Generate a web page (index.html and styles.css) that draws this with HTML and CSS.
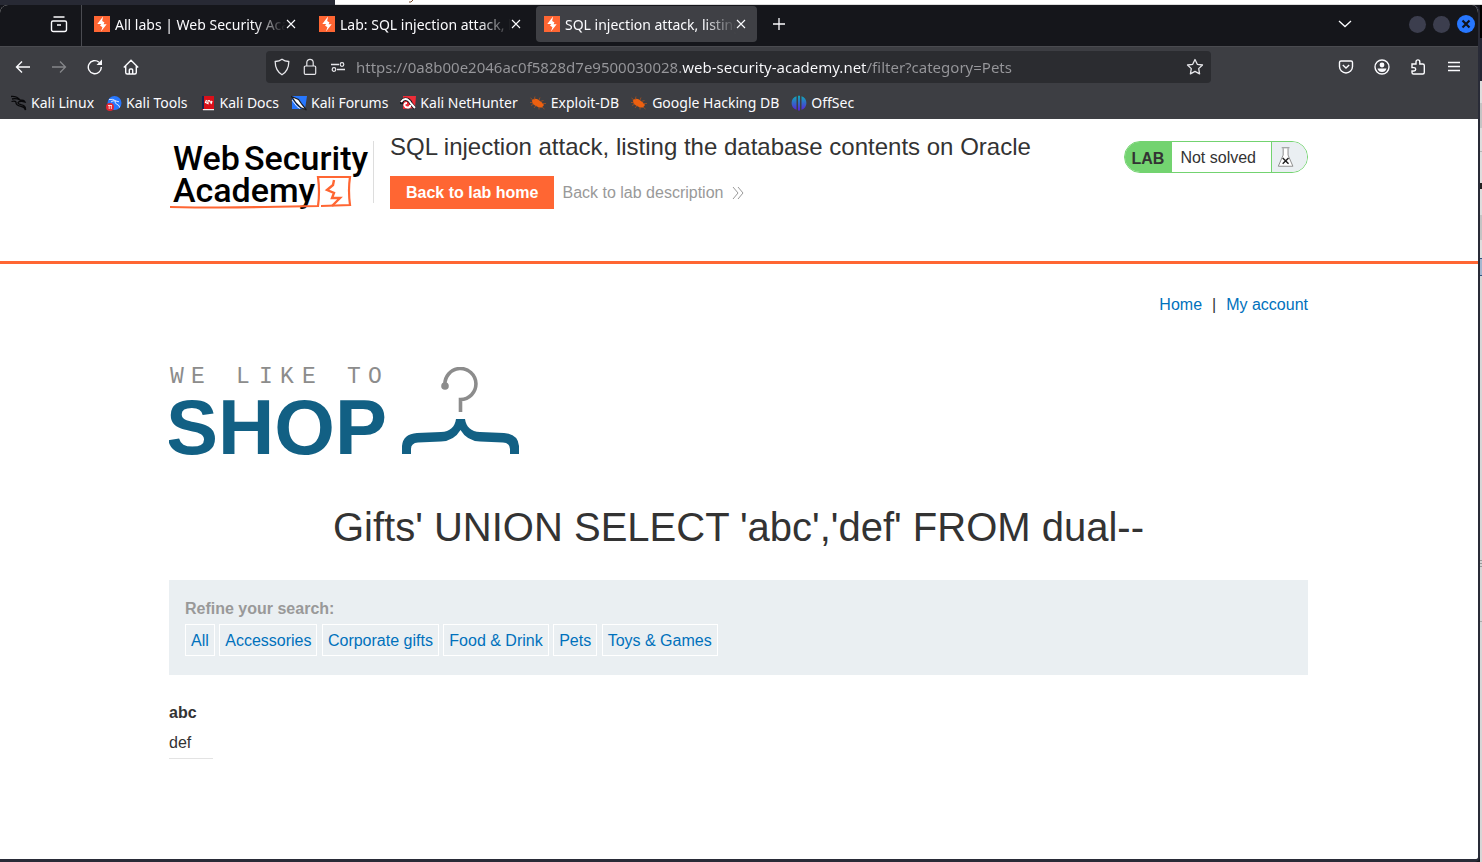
FILE: index.html
```html
<!DOCTYPE html>
<html lang="en">
<head>
<meta charset="utf-8">
<title>SQL injection attack, listing the database contents on Oracle</title>
<link rel="stylesheet" href="styles.css">
</head>
<body>
<svg class="defs" aria-hidden="true">
  <defs>
    <symbol id="bolt" viewBox="0 0 16 16">
      <rect width="16" height="16" fill="#ff6633"/>
      <path d="M9 .5 3.300 8h4L6 9.500 8.400 11.200 7 15.500 12.700 8.200H9.500l1-1.700L8.200 5z" fill="#fff"/>
    </symbol>
    <symbol id="close" viewBox="0 0 10 10"><path d="m1 1 8 8M9 1 1 9" fill="none" stroke="#fbfbfe" stroke-width="1.1"/></symbol>
    <symbol id="bug" viewBox="0 0 16 16">
      <path d="M2 5.500c1-2 4-2.500 6-1L12 7.500l2 2.500-2 2.500H9l-4-2-2.500-2z" fill="#ee6010"/>
      <path d="m4 5 1-3.500M2 7.500H0M3 5 .5 3M4 9l-3 1.500m5 0-2 2.500m5-1 0 2.500M9 5l1-2.500m0 4 3.500-1M12 8.500h4M12 12l2.500 2" fill="none" stroke="#a85220" stroke-width=".8"/>
    </symbol>
  </defs>
</svg>
<div class="behind-top"><div class="behind-page"><svg width="8" height="4" viewBox="0 0 8 4" aria-hidden="true"><path d="M5 0 3 2H1" fill="none" stroke="#7a4b2a"/></svg></div></div>
<div class="desktop">
<div class="window">
  <header class="tabbar">
    <button class="icon-btn recent" aria-label="Recent browsing"><svg width="18" height="18" viewBox="0 0 18 18"><path d="M3.500 2h11M3 6h12q1.500 0 1.500 1.500v7q0 2-2 2h-11q-2 0-2-2v-7Q1.500 6 3 6zM7 10h4" fill="none" stroke="#fbfbfe" stroke-width="1.400"/></svg></button>
    <div class="tabs">
      <div class="tab"><svg class="i16"><use href="#bolt"/></svg><span class="tab-title">All labs | Web Security Academy</span><button class="icon-btn" aria-label="Close tab"><svg class="i10"><use href="#close"/></svg></button></div>
      <div class="tab"><svg class="i16"><use href="#bolt"/></svg><span class="tab-title">Lab: SQL injection attack, listing</span><button class="icon-btn" aria-label="Close tab"><svg class="i10"><use href="#close"/></svg></button></div>
      <div class="tab active"><svg class="i16"><use href="#bolt"/></svg><span class="tab-title">SQL injection attack, listing the</span><button class="icon-btn" aria-label="Close tab"><svg class="i10"><use href="#close"/></svg></button></div>
    </div>
    <button class="icon-btn new-tab" aria-label="New tab"><svg width="14" height="14" viewBox="0 0 14 14"><path d="M7 1v12M1 7h12" stroke="#fbfbfe" stroke-width="1.300"/></svg></button>
    <button class="icon-btn list-tabs" aria-label="List all tabs"><svg width="14" height="8" viewBox="0 0 14 8"><path d="m1 1 6 5.500L13 1" fill="none" stroke="#fbfbfe" stroke-width="1.300"/></svg></button>
    <div class="controls">
      <button class="ctl" aria-label="Minimize"></button>
      <button class="ctl" aria-label="Maximize"></button>
      <button class="ctl ctl-close" aria-label="Close window"><svg width="10" height="10" viewBox="0 0 10 10"><path d="m1.500 1.500 7 7M8.500 1.500l-7 7" stroke="#10131c" stroke-width="2.200"/></svg></button>
    </div>
  </header>
  <div class="navbar">
    <div class="nav-left">
      <button class="icon-btn" aria-label="Back"><svg width="16" height="16" viewBox="0 0 16 16"><path d="M15 8H1.500M7 2.500 1.500 8 7 13.500" fill="none" stroke="#fbfbfe" stroke-width="1.400"/></svg></button>
      <button class="icon-btn" aria-label="Forward"><svg width="16" height="16" viewBox="0 0 16 16"><path d="M1 8h13.500M9 2.500 14.500 8 9 13.500" fill="none" stroke="#85868a" stroke-width="1.300"/></svg></button>
      <button class="icon-btn" aria-label="Reload"><svg width="16" height="16" viewBox="0 0 16 16"><path d="M14.300 8A6.500 6.500 0 1 1 12 3.200" fill="none" stroke="#fbfbfe" stroke-width="1.400"/><path d="M15 .5v5.500H9.500z" fill="#fbfbfe"/></svg></button>
      <button class="icon-btn" aria-label="Home"><svg width="16" height="16" viewBox="0 0 16 16"><path d="M.8 8.500 8 1.300l7.200 7.200M2.700 7v6.500q0 1.500 1.500 1.500h7.600q1.500 0 1.500-1.500V7M6.300 15v-4q0-1 1-1h1.400q1 0 1 1v4" fill="none" stroke="#fbfbfe" stroke-width="1.400"/></svg></button>
    </div>
    <div class="urlbar">
      <svg width="16" height="18" viewBox="0 0 16 18"><path d="M8 1.200C6 2.700 3.500 3.300 1.200 3.500c0 6 1.500 10 6.800 13.300 5.300-3.300 6.800-7.300 6.800-13.300C12.500 3.300 10 2.700 8 1.200z" fill="none" stroke="#e6e6ea" stroke-width="1.300"/></svg>
      <svg width="16" height="18" viewBox="0 0 16 18"><path d="M3.500 8h9q1.200 0 1.200 1.200v6q0 1.200-1.200 1.200h-9q-1.200 0-1.200-1.200v-6Q2.300 8 3.500 8zM4.800 8V4.500a3.200 3.200 0 0 1 6.400 0V8" fill="none" stroke="#e6e6ea" stroke-width="1.200"/></svg>
      <svg width="16" height="12" viewBox="0 0 16 12"><path d="M1 3.500h8M7 8.500h8" stroke="#e6e6ea" stroke-width="1.300"/><circle cx="12" cy="3.500" r="1.800" fill="none" stroke="#e6e6ea" stroke-width="1.200"/><circle cx="4" cy="8.500" r="1.800" fill="none" stroke="#e6e6ea" stroke-width="1.200"/></svg>
      <input class="url" type="text" aria-label="Address" spellcheck="false" value="https://0a8b00e2046ac0f5828d7e9500030028.web-security-academy.net/filter?category=Pets">
      <button class="icon-btn" aria-label="Bookmark this page"><svg width="18" height="18" viewBox="0 0 18 18"><path d="m9 1.500 2.300 4.800 5.200.7-3.800 3.600.9 5.300L9 13.400l-4.600 2.500.9-5.300L1.500 7l5.200-.7z" fill="none" stroke="#e6e6ea" stroke-width="1.300" stroke-linejoin="round"/></svg></button>
    </div>
    <div class="nav-right">
      <button class="icon-btn" aria-label="Save to Pocket"><svg width="16" height="16" viewBox="0 0 16 16"><path d="M3 2h10q1.500 0 1.500 1.500v4a6.500 6.500 0 0 1-13 0v-4Q1.500 2 3 2zM4.800 6 8 9l3.200-3" fill="none" stroke="#fbfbfe" stroke-width="1.400"/></svg></button>
      <button class="icon-btn" aria-label="Account"><svg width="16" height="16" viewBox="0 0 16 16"><circle cx="8" cy="8" r="7" fill="none" stroke="#fbfbfe" stroke-width="1.400"/><circle cx="8" cy="6" r="2.400" fill="#fbfbfe"/><path d="M3.500 9.500h9q-1 3.500-4.500 3.500t-4.500-3.500z" fill="#fbfbfe"/></svg></button>
      <button class="icon-btn" aria-label="Extensions"><svg width="16" height="16" viewBox="0 0 16 16"><path d="M6 5V2.800a1.900 1.900 0 0 1 3.800 0V5h3q1.500 0 1.500 1.500v7q0 1.500-1.500 1.500H3.500Q2 15 2 13.500V12h2a1.700 1.700 0 0 0 0-3.400H2V5z" fill="none" stroke="#fbfbfe" stroke-width="1.400"/></svg></button>
      <button class="icon-btn" aria-label="Application menu"><svg width="16" height="16" viewBox="0 0 16 16"><path d="M2 3.500h12M2 7.500h12M2 11.500h12" stroke="#fbfbfe" stroke-width="1.300"/></svg></button>
    </div>
  </div>
  <nav class="bookmarks" aria-label="Bookmarks">
    <a href="#"><svg class="i16" viewBox="0 0 16 16"><path d="M0 1.500q6-.5 9 3.500M1 4q4-1 8 1 4 0 5 2l-3-.7q-3-.3-4 1.200 0 1.500 3 2.200 5 1 4.500 5.300-1-3-4.500-3.600Q4.500 10.500 5 7 4 5.500.5 6.500" fill="none" stroke="#08080a" stroke-width="1.300"/></svg>Kali Linux</a>
    <a href="#"><svg class="i16" viewBox="0 0 16 16"><circle cx="8.500" cy="8" r="7" fill="#2777ff"/><path d="M3 4.500q4-1 7 1.500l3 .8M5 7q2-2 4.500-.8Q8 8 11 9.300t2.500 3.200" fill="none" stroke="#dbe8ff" stroke-width="1"/><circle cx="4" cy="12" r="4" fill="#e22631"/><path d="M2 10.500h4M3.200 10.500v3.500M5.300 10.500v3.500" stroke="#fff" stroke-width=".8"/></svg>Kali Tools</a>
    <a href="#"><svg class="i16" viewBox="0 0 16 16"><path d="M2 1h12v14H2z" fill="#d9101a"/><path d="M2 1h2v13H2z" fill="#17264f"/><path d="M3 14h11v1.300H3z" fill="#eee"/><path d="m6.500 5-1 2.500L8 8.500V5.800q1.500-.8 2 .7t2-.5L11 9" fill="none" stroke="#fff" stroke-width="1.200"/></svg>Kali Docs</a>
    <a href="#"><svg class="i16" viewBox="0 0 16 16"><path d="M1 1h15l-2 13H1z" fill="#2777ff"/><path d="m.5 1.500 7 3 3.500 5 4.500 5.500-6-2.500-4.500-4.500z" fill="#fff" stroke="#1b1c20" stroke-width="1.200"/><path d="m1 5 5 6.500 3 2" fill="none" stroke="#eee"/></svg>Kali Forums</a>
    <a href="#"><svg class="i16" viewBox="0 0 16 16"><path d="m3 1 13 0-1 12L3 14z" fill="#ee2d38"/><path d="M1.500 9Q2 3 7 4.500q3 1 4 4l4 5" fill="none" stroke="#15161a" stroke-width="3.500"/><path d="M1 7q3-4 6.500-2.500Q10 6 11 8.500l4 4.500M7 8q-3 0-2.500 2.500 1 2.500 4 2 2-.5 1.500-2.500" fill="none" stroke="#fff" stroke-width="2"/></svg>Kali NetHunter</a>
    <a class="wide" href="#"><svg class="i16"><use href="#bug"/></svg>Exploit-DB</a>
    <a class="wide" href="#"><svg class="i16"><use href="#bug"/></svg>Google Hacking DB</a>
    <a href="#"><svg class="i16" viewBox="0 0 16 16"><defs><linearGradient id="og" gradientUnits="userSpaceOnUse" x1="0" y1="1" x2="0" y2="15"><stop stop-color="#10a9b8"/><stop offset="1" stop-color="#5627d8"/></linearGradient></defs><path d="M5.500 1.300v13.400Q.6 13 .6 8t4.900-6.700zM7 .8h2v14.400l-1 .6-1-.6zM10.500 1.300Q15.400 3 15.400 8t-4.900 6.700z" fill="url(#og)"/></svg>OffSec</a>
  </nav>
  <main class="page">
    <header class="lab-header">
      <div class="container lab-row">
        <a class="academy" href="#" aria-label="Web Security Academy">
          <svg width="204" height="76" viewBox="0 0 204 76">
            <g class="academy-text"><text x="4" y="37">Web</text><text x="75" y="37">Security</text><text x="4" y="69">Academy</text></g>
            <path d="M1 74q50 1 95 0l53-1q2-14 0-29h32q-2 13 0 28l-29 1" fill="none" stroke="#ff6633" stroke-width="2.200"/>
            <path d="m165 47-1 5-6 5 7 3-2 5h8l-8 8" fill="none" stroke="#ff6633" stroke-width="2.400"/>
          </svg>
        </a>
        <div class="lab-title">
          <h2>SQL injection attack, listing the database contents on Oracle</h2>
          <div class="lab-links"><a class="home-btn" href="#">Back to lab home</a><a class="desc" href="#">Back to lab description<svg width="12" height="12" viewBox="0 0 12 12"><path d="m1 0 5 6-5 6M6 0l5 6-5 6" fill="none" stroke="#999" stroke-width="1"/></svg></a></div>
        </div>
        <div class="status"><strong>LAB</strong><span>Not solved</span><svg width="36" height="30" viewBox="0 0 36 30"><path d="M10 5.500h8M11.500 6v7L6.500 24.500h15L16.500 13V6" fill="#fff" stroke="#8c8c8c"/><path d="m11 16 6 6m0-6-6 6" stroke="#222" stroke-width="1.500"/></svg></div>
      </div>
    </header>
    <div class="container">
      <nav class="account" aria-label="Account"><a href="#">Home</a><span>|</span><a href="#">My account</a></nav>
      <svg class="shop" width="352" height="90" viewBox="0 0 352 90" role="img" aria-label="We like to shop">
        <g class="like"><text x="1" y="16">W</text><text x="22" y="16">E</text><text x="67" y="16">L</text><text x="90" y="16">I</text><text x="111" y="16">K</text><text x="133" y="16">E</text><text x="178" y="16">T</text><text x="199" y="16">O</text></g>
        <text class="shop-text" x="-3" y="87">SHOP</text>
        <path d="M276 18.500a15.500 15.500 0 1 1 15.500 14V45" fill="none" stroke="#8c8c8c" stroke-width="3.600"/><circle cx="276" cy="19" r="3.800" fill="#8c8c8c"/>
        <path d="M287 52h9c1 8 6 12.500 15 13l24 1q14 1 15 13v8h-9v-5q0-6-7-6.500l-23-1q-13-.5-19.500-11.500-6.500 11-19.500 11.500l-23 1q-7 .5-7 6.500v5h-9v-8q1-12 15-13l24-1c9-.5 14-5 15-13z" fill="#126084"/>
      </svg>
      <h1>Gifts' UNION SELECT 'abc','def' FROM dual--</h1>
      <section class="filters">
        <p>Refine your search:</p>
        <a href="#">All</a>
        <a href="#">Accessories</a>
        <a href="#">Corporate gifts</a>
        <a href="#">Food &amp; Drink</a>
        <a href="#">Pets</a>
        <a href="#">Toys &amp; Games</a>
      </section>
      <table class="results"><tbody><tr><th scope="row">abc</th></tr><tr><td>def</td></tr></tbody></table>
    </div>
  </main>
</div>
<div class="behind-side"></div>
</div>
</body>
</html>
```
FILE: styles.css
```css
* { box-sizing: border-box; }
body { margin: 0; min-height: 100vh; display: flex; flex-direction: column; background: #08090d; font: 16px/20px "Liberation Sans", Arial, sans-serif; color: #333; }
a { text-decoration: none; color: #0071bc; }
svg { flex: none; display: block; }
button { font: inherit; border: 0; padding: 0; background: none; cursor: pointer; }
.defs { position: absolute; width: 0; height: 0; }
.i16 { width: 16px; height: 16px; }
.i10 { width: 10px; height: 10px; }
.icon-btn { display: flex; align-items: center; justify-content: center; flex: none; }

.behind-top { height: 5px; background: #272934; }
.behind-page { margin-left: 335px; height: 5px; background: #fff; border-bottom: 1px solid #dcdcdc; padding-left: 73px; }
.desktop { flex: 1; display: flex; background: #14151b; }
.behind-side { width: 2px; background: linear-gradient(#000 0 33px, #242633 33px 76px, #ddd 76px 98px, #c4c4c4 98px 123px, #ddd 123px 146px, #b5b5b5 146px 147px, #ddd 147px 178px, #222 178px 184px, #ddd 184px 210px, #c4c4c4 210px 235px, #ddd 235px 253px, #2f537f 253px 254px, #a4b7cf 254px 270px, #2f537f 270px 271px, #d6d6d6 271px 555px, #999 555px 556px, #d6d6d6 556px 558px, #999 558px 559px, #d6d6d6 559px 561px, #999 561px 562px, #d6d6d6 562px 616px, #aaa 616px 617px, #d6d6d6 617px); }
.window { flex: 1; min-width: 0; display: flex; flex-direction: column; border-right: 2px solid #292b37; border-bottom: 3px solid #292b37; border-radius: 8px 8px 5px 0; overflow: hidden; background: #fff; }

.tabbar, .navbar, .bookmarks { font: 14px/20px "Noto Sans", sans-serif; color: #fbfbfe; }
.tabbar { height: 41px; display: flex; align-items: center; background: #15161b; padding-bottom: 3px; }
.recent { width: 82px; height: 41px; margin-bottom: -3px; padding: 0 0 4px 36px; border-right: 1px solid #4a4b51; }
.tabs { display: flex; gap: 4px; padding-left: 4px; align-self: flex-start; margin-top: 1px; }
.tab { width: 221px; height: 36px; display: flex; align-items: center; padding: 0 11px 0 8px; border-radius: 4px; }
.tab.active { background: #3f4045; }
.tab-title { flex: 1; min-width: 0; margin: 0 0 0 5px; padding-top: 1px; overflow: hidden; white-space: nowrap; mask-image: linear-gradient(to left, transparent, #000 32px); }
.new-tab { margin-left: 15px; }
.list-tabs { margin-left: auto; }
.controls { display: flex; align-items: center; gap: 7px; margin: 0 3px 0 57px; }
.ctl { width: 17px; height: 17px; border-radius: 50%; background: #3c3e4e; }
.ctl-close { width: 18px; height: 18px; display: flex; align-items: center; justify-content: center; background: #2777ff; }

.navbar { height: 41px; display: flex; align-items: center; background: #3d3e43; border-top: 1px solid #4a4b50; padding: 0 16px 0 15px; }
.nav-left, .nav-right { display: flex; gap: 20px; }
.urlbar { flex: 0 1 945px; height: 32px; margin: 0 auto 0 127px; padding: 0 7px 0 8px; display: flex; align-items: center; gap: 12px; background: #2b2c30; border-radius: 4px; }
.url { flex: 1; min-width: 0; margin-left: -2px; border: 0; padding: 0; outline: 0; font: 15px/22px "Noto Sans", sans-serif; color: #97979b; background: linear-gradient(to right, #97979b 326px, #fbfbfe 326px 511px, #97979b 511px); background-clip: text; -webkit-background-clip: text; -webkit-text-fill-color: transparent; }
.bookmarks { height: 32px; display: flex; align-items: center; gap: 12px; padding: 0 11px; background: #3d3e43; }
.bookmarks a { display: flex; align-items: center; gap: 4px; color: #fbfbfe; white-space: nowrap; }
.bookmarks .wide { gap: 5px; }

.container { width: calc(100% - 32px); max-width: 1140px; margin: 0 auto; padding-right: 1px; }
.lab-header { border-bottom: 3px solid #ff6633; padding: 14px 0 52px; }
.lab-row { display: flex; align-items: flex-start; }
.academy { height: 62px; margin: 8px 16px 0 0; border-right: 1px solid #ddd; }
.academy svg { margin-top: -8px; }
.academy-text { font: 500 34px Roboto, sans-serif; fill: #000; }
.lab-title { flex: 1; }
h2 { margin: 0 0 15px; font-size: 24px; line-height: 28px; font-weight: 400; }
.lab-links { display: flex; align-items: center; gap: 8px; }
.home-btn { padding: 0 16px; line-height: 33px; font-weight: 700; color: #fff; background: #ff6633; }
.desc { display: flex; align-items: center; gap: 9px; color: #999; }
.status { display: flex; margin-top: 8px; height: 32px; border: 1px solid #73d370; border-radius: 16px; overflow: hidden; line-height: 32px; background: #fff; }
.status strong { padding: 0 8px 0 7px; background: #73d370; line-height: 33px; }
.status span { padding: 0 15px 0 8px; border-right: 1px solid #73d370; }
.status svg { width: 35px; background: #eaeff2; }

.account { display: flex; justify-content: flex-end; gap: 10px; padding-top: 31px; }
.shop { margin-top: 52px; }
.like { font: 23px "Liberation Mono", monospace; fill: #8c8c8c; }
.shop-text { font: 700 78px "Liberation Sans", Arial, sans-serif; fill: #126084; }
h1 { margin: 46px 0 29px; font-size: 40px; line-height: 48px; font-weight: 400; text-align: center; }
.filters { padding: 19px 16px; background: #eaeff2; }
.filters p { margin: 0 0 5px; font-weight: 700; color: #999; }
.filters a { display: inline-block; vertical-align: top; height: 32px; padding: 1px 5px 0; line-height: 30px; border: 1px solid #fff; }
.results { margin-top: 23px; border-collapse: collapse; }
.results th, .results td { padding: 5px 16px 5px 0; text-align: left; }
.results td { border-bottom: 1px solid #e3e3e3; }
```
